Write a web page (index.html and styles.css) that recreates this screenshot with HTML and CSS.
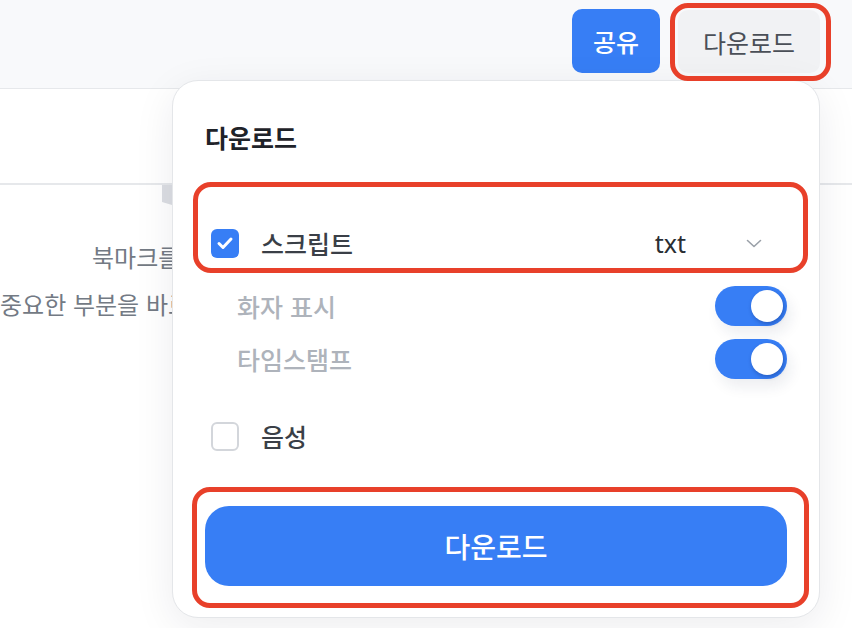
FILE: index.html
```html
<!DOCTYPE html>
<html lang="ko">
<head>
<meta charset="utf-8">
<link rel="stylesheet" href="styles.css">
</head>
<body>
<header class="topbar">
  <button class="btn-share">공유</button>
  <button class="btn-download">다운로드</button>
</header>
<div class="tabbar">
  <div class="tab-thumb"></div>
</div>
<main class="content">
  <div class="content-inner">
    <p class="empty-line first">북마크를 추가하세요</p>
    <p class="empty-line">중요한 부분을 바로 찾아볼 수 있어요</p>
  </div>
</main>

<section class="popover">
  <h2 class="pop-title">다운로드</h2>
  <div class="row row-main">
    <span class="check checked">
      <svg viewBox="0 0 28 28" width="28" height="28"><path d="M8 14.5l4 4 8-8.5" fill="none" stroke="#fff" stroke-width="3" stroke-linecap="round" stroke-linejoin="round"/></svg>
    </span>
    <span class="label">스크립트</span>
    <span class="format">txt</span>
    <svg class="chevron" viewBox="0 0 16 9" width="16" height="9"><path d="M1.5 1.5l6.5 6 6.5-6" fill="none" stroke="#9aa0a8" stroke-width="1.6" stroke-linecap="round" stroke-linejoin="round"/></svg>
  </div>
  <div class="row row-sub first-sub">
    <span class="sub-label">화자 표시</span>
    <span class="toggle"><span class="knob"></span></span>
  </div>
  <div class="row row-sub second-sub">
    <span class="sub-label">타임스탬프</span>
    <span class="toggle"><span class="knob"></span></span>
  </div>
  <div class="row row-main audio">
    <span class="check"></span>
    <span class="label">음성</span>
  </div>
  <button class="btn-primary">다운로드</button>
</section>

<div class="mark mark-top"></div>
<div class="mark mark-row"></div>
<div class="mark mark-btn"></div>
</body>
</html>
```

FILE: styles.css
```css
* { box-sizing: border-box; }
html, body { margin: 0; padding: 0; }
body {
  width: 852px;
  height: 628px;
  overflow: hidden;
  background: #ffffff;
  font-family: "Noto Sans CJK KR", "Noto Sans", sans-serif;
  position: relative;
  color: #3a3f47;
}
button { font-family: inherit; border: none; cursor: pointer; }

.topbar {
  height: 89px;
  background: #f8f9fb;
  border-bottom: 1px solid #e6e8eb;
  display: flex;
  justify-content: flex-end;
  align-items: flex-start;
  gap: 18px;
  padding: 9px 32px 0 0;
}
.btn-share {
  width: 88px;
  height: 64px;
  border-radius: 10px;
  background: #377ef5;
  color: #fff;
  font-size: 25px;
  font-weight: 500;
}
.btn-download {
  width: 142px;
  height: 63px;
  margin-top: 1px;
  border-radius: 10px;
  background: #f1f2f4;
  color: #4a4f57;
  font-size: 25px;
  font-weight: 400;
}

.tabbar {
  height: 96px;
  border-bottom: 2px solid #e6e8eb;
  position: relative;
}
.tab-thumb {
  position: absolute;
  left: 162px;
  top: 96px;
  width: 10px;
  height: 20px;
  background: #dcdee3;
  clip-path: polygon(0 0, 100% 0, 100% 100%, 0 85%);
}

.content {
  width: 172px;
  overflow: hidden;
  padding-top: 48px;
}
.content-inner {
  width: 400px;
  text-align: left;
}
.empty-line {
  margin: 0;
  font-size: 24px;
  line-height: 47px;
  color: #737a84;
  white-space: nowrap;
}
.empty-line.first { padding-left: 92px; }

.popover {
  position: absolute;
  left: 172px;
  top: 80px;
  width: 648px;
  height: 538px;
  background: #fff;
  border: 1px solid #e4e6e9;
  border-radius: 26px;
  box-shadow: 0 10px 40px rgba(20, 30, 50, 0.08);
  padding: 40px 32px 31px;
  display: flex;
  flex-direction: column;
}
.pop-title {
  margin: 0;
  height: 32px;
  line-height: 32px;
  font-size: 25px;
  font-weight: 700;
  color: #1f2329;
  padding-left: 0;
}
.row {
  display: flex;
  align-items: center;
}
.row-main {
  height: 48px;
  margin-top: 66px;
  padding-left: 6px;
}
.check {
  width: 28px;
  height: 29px;
  border-radius: 6px;
  border: 2px solid #d3d6db;
  background: #fff;
  display: flex;
  align-items: center;
  justify-content: center;
  flex: none;
}
.check.checked {
  border: none;
  background: #377ef5;
}
.label {
  margin-left: 22px;
  font-size: 25px;
  font-weight: 500;
  color: #3a3f47;
}
.format {
  margin-left: auto;
  font-family: "Noto Sans", sans-serif;
  font-size: 25px;
  color: #2a2e33;
  margin-right: 60px;
}
.chevron { margin-right: 25px; }

.row-sub {
  height: 40px;
  padding-left: 32px;
  justify-content: space-between;
}
.first-sub { margin-top: 19px; }
.second-sub { margin-top: 13px; }
.sub-label {
  font-size: 25px;
  font-weight: 500;
  color: #aeb3bb;
}
.toggle {
  width: 72px;
  height: 40px;
  border-radius: 20px;
  background: #377ef5;
  padding: 4px;
  display: flex;
  justify-content: flex-end;
  box-shadow: 4px 8px 14px rgba(20, 40, 80, 0.08);
}
.knob {
  width: 32px;
  height: 32px;
  border-radius: 50%;
  background: #fff;
  box-shadow: 1px 2px 4px rgba(0, 20, 80, 0.3);
}
.audio { margin-top: 33px; }

.btn-primary {
  margin-top: 46px;
  height: 80px;
  width: 100%;
  border-radius: 24px;
  background: #377ef5;
  color: #fff;
  font-size: 28px;
  font-weight: 500;
}

.mark {
  position: absolute;
  border: 5px solid #e8402a;
  border-radius: 18px;
  pointer-events: none;
}
.mark-top { left: 670px; top: 3px; width: 161px; height: 78px; }
.mark-row { left: 193px; top: 182px; width: 615px; height: 91px; }
.mark-btn { left: 192px; top: 487px; width: 617px; height: 121px; }
```
